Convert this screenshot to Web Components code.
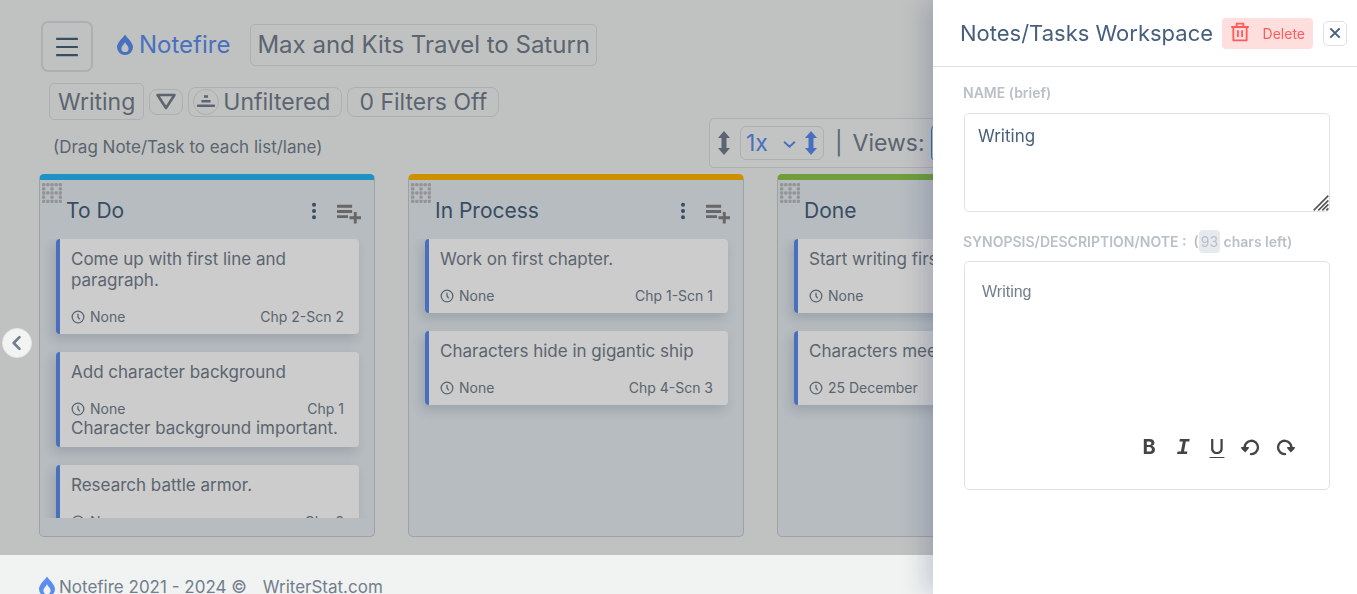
<!DOCTYPE html>
<html lang="en">
<head>
<meta charset="utf-8">
<title>Notefire</title>
<style>
    html {
        --primary: #5a8dee;
        --heading: #475f7b;
        --text: #727e8c;
        --border: #d9dbdc;
        --danger: #ff5b5c;
    }

    body {
        margin: 0;
        overflow: hidden;
        background: #f1f3f2;
        color: var(--text);
        font: 17px/21px Inter, "Liberation Sans", sans-serif;
    }
</style>
</head>
<body>

<nf-workspace>
    <nf-header project="Max and Kits Travel to Saturn"></nf-header>
    <nf-toolbar></nf-toolbar>
    <nf-board>
        <nf-lane name="To Do" style="--lane: #27b7f5">
            <nf-card due="None" place="Chp 2-Scn 2">Come up with first line and paragraph.</nf-card>
            <nf-card due="None" place="Chp 1">Add character background<span slot="note">Character background important.</span></nf-card>
            <nf-card due="None" place="Chp 2">Research battle armor.</nf-card>
        </nf-lane>
        <nf-lane name="In Process" style="--lane: #ffb400">
            <nf-card due="None" place="Chp 1-Scn 1">Work on first chapter.</nf-card>
            <nf-card due="None" place="Chp 4-Scn 3">Characters hide in gigantic ship</nf-card>
        </nf-lane>
        <nf-lane name="Done" style="--lane: #8bc649">
            <nf-card due="None" place="">Start writing first</nf-card>
            <nf-card due="25 December" place="">Characters meet</nf-card>
        </nf-lane>
    </nf-board>
</nf-workspace>
<nf-footer></nf-footer>
<nf-drawer></nf-drawer>

<template id="nf-workspace">
    <style>
        :host {
            display: block;
            position: relative;
            padding: 21px 39px 18px;
        }

        /* dims the board while the drawer is open */
        .backdrop {
            position: absolute;
            inset: 0;
            background: rgba(0, 0, 0, .2);
            pointer-events: none;
        }

        .back {
            position: fixed;
            left: 2px;
            top: 328px;
            width: 30px;
            height: 30px;
            padding: 0;
            display: grid;
            place-items: center;
            border: 1px solid #e4e6e7;
            border-radius: 50%;
            background: #f2f4f4;
            color: var(--text);
        }
    </style>
    <slot></slot>
    <div class="backdrop"></div>
    <button class="back" aria-label="Back"><nf-icon name="left" size="20"></nf-icon></button>
</template>

<template id="nf-header">
    <style>
        :host {
            display: flex;
            align-items: center;
            padding-left: 2px;
            font-size: 24px;
            line-height: 30px;
        }

        button {
            font: inherit;
            color: inherit;
            background: transparent;
            border: 1px solid var(--border);
            border-radius: 5px;
        }

        .menu {
            width: 52px;
            height: 51px;
            padding: 0;
            display: grid;
            place-items: center;
            border-width: 2px;
            border-radius: 7px;
            color: var(--heading);
        }

        a {
            display: flex;
            align-items: center;
            gap: 2px;
            margin: 0 20px 3px 20px;
            color: var(--primary);
            text-decoration: none;
        }

        .project {
            padding: 5px 6px;
            margin-bottom: 3px;
        }
    </style>
    <button class="menu" aria-label="Menu"><nf-icon name="menu" size="26"></nf-icon></button>
    <a href="#"><nf-icon name="fire" size="24"></nf-icon>Notefire</a>
    <button class="project"></button>
</template>

<template id="nf-toolbar">
    <style>
        :host {
            display: grid;
            grid-template-columns: 11fr 10fr;
            align-items: end;
            margin: 11px 0 6px;
            font-size: 23px;
            line-height: 28px;
        }

        button {
            font: inherit;
            color: inherit;
            background: transparent;
            border: 1px solid var(--border);
            border-radius: 8px;
        }

        .filters {
            display: flex;
            align-items: center;
            gap: 5px;
            padding-left: 10px;
        }

        .list {
            padding: 4px 8px 3px;
            border-radius: 5px;
        }

        .sort {
            width: 34px;
            height: 26px;
            padding: 0;
            display: grid;
            place-items: center;
        }

        .filter {
            display: flex;
            align-items: center;
            gap: 4px;
            height: 30px;
            padding: 0 11px 0 4px;
        }

        .filter .ring {
            display: grid;
            place-items: center;
            width: 24px;
            height: 24px;
            border: 1px solid var(--border);
            border-radius: 50%;
        }

        .filter.plain {
            padding: 0 11px;
        }

        p {
            margin: 15px 0 9px 14px;
            font-size: 17px;
            line-height: 24px;
        }

        .views {
            display: flex;
            align-items: center;
            box-sizing: border-box;
            height: 50px;
            padding: 0 2px;
            border: 1px solid var(--border);
            border-radius: 5px;
            background: rgba(255, 255, 255, .15);
        }

        .zoom {
            display: flex;
            align-items: center;
            box-sizing: border-box;
            height: 34px;
            margin: 0 11px 0 4px;
            border: 1px solid var(--border);
            border-radius: 6px;
            color: var(--primary);
        }

        select {
            grid-area: 1 / 1;
            width: 58px;
            padding: 0 0 0 5px;
            font: inherit;
            color: inherit;
            appearance: none;
            border: 0;
            background: transparent;
        }

        .pick {
            display: grid;
            align-items: center;
        }

        .pick nf-icon {
            grid-area: 1 / 1;
            justify-self: end;
            margin: 3px 3px 0 0;
            pointer-events: none;
        }

        .bar {
            margin-right: 10px;
        }

        .view {
            width: 46px;
            height: 38px;
            margin-left: 6px;
            padding: 0;
            border-radius: 6px;
        }

        .view.on {
            border-color: #2a94dd;
        }
    </style>
    <div>
        <div class="filters">
            <button class="list">Writing</button>
            <button class="sort" aria-label="Sort"><nf-icon name="triangle" size="24"></nf-icon></button>
            <button class="filter"><span class="ring"><nf-icon name="stack" size="20"></nf-icon></span>Unfiltered</button>
            <button class="filter plain">0 Filters Off</button>
        </div>
        <p>(Drag Note/Task to each list/lane)</p>
    </div>
    <div class="views">
        <nf-icon name="updown" size="24"></nf-icon>
        <div class="zoom">
            <span class="pick">
                <select aria-label="Height"><option>1x</option></select>
                <nf-icon name="down" size="13"></nf-icon>
            </span>
            <nf-icon name="updown" size="24"></nf-icon>
        </div>
        <span class="bar">|</span>Views:
        <button class="view on" aria-label="Board view"></button>
        <button class="view" aria-label="List view"></button>
    </div>
</template>

<template id="nf-board">
    <style>
        :host {
            display: grid;
            grid-auto-flow: column;
            grid-auto-columns: 336px;
            gap: 33px;
        }
    </style>
    <slot></slot>
</template>

<template id="nf-lane">
    <style>
        :host {
            display: flex;
            flex-direction: column;
            box-sizing: border-box;
            padding-bottom: 18px;
            border: 1px solid #c9cacc;
            border-top: 6px solid var(--lane);
            border-radius: 5px;
            background: #e4ebf0;
        }

        header {
            display: flex;
            align-items: center;
            height: 59px;
            box-sizing: border-box;
            padding: 3px 13px 0 2px;
            color: var(--heading);
        }

        .grip {
            align-self: flex-start;
            color: #b9babb;
        }

        h2 {
            flex: 1;
            margin: 0 0 0 4px;
            font-size: 21px;
            line-height: 26px;
            font-weight: 400;
        }

        button {
            display: grid;
            padding: 0;
            border: 0;
            background: transparent;
            color: inherit;
        }

        .add {
            margin: 5px 0 0 12px;
            color: #828080;
        }

        .cards {
            display: flex;
            flex-direction: column;
            gap: 18px;
            height: 279px;
            padding: 0 15px 0 16px;
            overflow: hidden;
        }
    </style>
    <header>
        <nf-icon class="grip" name="grip" size="20"></nf-icon>
        <h2></h2>
        <button aria-label="Lane menu"><nf-icon name="dots" size="20"></nf-icon></button>
        <button class="add" aria-label="Add note"><nf-icon name="add" size="25"></nf-icon></button>
    </header>
    <div class="cards"><slot></slot></div>
</template>

<template id="nf-card">
    <style>
        :host {
            display: block;
            flex: none;
            padding: 10px 15px 8px 11px;
            border-left: 4px solid var(--primary);
            border-radius: 4px;
            background: #fff;
            box-shadow: -3px 5px 12px rgba(25, 42, 70, .16);
        }

        .meta {
            display: flex;
            align-items: center;
            margin-top: 17px;
            font-size: 14px;
            line-height: 18px;
        }

        .due {
            flex: 1;
            margin-left: 5px;
        }
    </style>
    <div><slot></slot></div>
    <div class="meta">
        <nf-icon name="clock" size="14"></nf-icon>
        <span class="due"></span>
        <span class="place"></span>
    </div>
    <slot name="note"></slot>
</template>

<template id="nf-footer">
    <style>
        :host {
            display: flex;
            align-items: center;
            padding: 20px 35px;
            line-height: 24px;
        }

        nf-icon {
            color: var(--primary);
        }

        a {
            margin-left: 16px;
            color: inherit;
            text-decoration: none;
        }
    </style>
    <nf-icon name="fire" size="24"></nf-icon>
    <span>Notefire 2021 - 2024 ©</span>
    <a href="#">WriterStat.com</a>
</template>

<template id="nf-drawer">
    <style>
        :host {
            position: fixed;
            top: 0;
            right: 0;
            bottom: 0;
            width: 424px;
            background: #fff;
            box-shadow: -8px 0 24px rgba(25, 42, 90, .2);
        }

        header {
            display: flex;
            align-items: center;
            box-sizing: border-box;
            height: 67px;
            padding: 0 10px 0 27px;
            border-bottom: 1px solid #dfe3ea;
            color: var(--heading);
        }

        h1 {
            flex: 1;
            margin: 0;
            font-size: 22px;
            line-height: 28px;
            font-weight: 400;
            white-space: nowrap;
        }

        button {
            padding: 0;
            border: 0;
            background: transparent;
            color: inherit;
        }

        .delete {
            display: flex;
            align-items: center;
            gap: 13px;
            height: 31px;
            padding: 2px 8px 0;
            border-radius: 4px;
            background: #ffdede;
            color: var(--danger);
            font: 14px/18px Inter, sans-serif;
        }

        .delete nf-icon {
            margin-bottom: 4px;
        }

        .close {
            display: grid;
            place-items: center;
            width: 24px;
            height: 25px;
            margin-left: 10px;
            border: 1px solid #dfe3e7;
            border-radius: 5px;
        }

        form {
            display: flex;
            flex-direction: column;
            padding: 17px 27px 0 31px;
        }

        label {
            margin-left: -1px;
            color: #bac0c7;
            font-size: 14px;
            font-weight: 600;
            line-height: 18px;
            white-space: nowrap;
        }

        label span {
            padding: 3px 2px;
            border-radius: 4px;
            background: #e6eaee;
            font-weight: 400;
        }

        textarea {
            display: block;
            box-sizing: border-box;
            width: 100%;
            resize: none;
            border: 0;
            outline: 0;
            background: transparent;
        }

        .name,
        .editor {
            position: relative;
            border: 1px solid #dfe3e7;
            border-radius: 5px;
        }

        .name {
            margin: 11px 0 21px;
        }

        .name textarea {
            height: 97px;
            padding: 11px 13px;
            color: var(--heading);
            font: 17px/22px Inter, sans-serif;
        }

        .name nf-icon {
            position: absolute;
            right: 0;
            bottom: 0;
            color: #555;
            pointer-events: none;
        }

        .editor {
            margin-top: 10px;
        }

        .editor textarea {
            height: 169px;
            padding: 19px 17px;
            color: var(--text);
            font: 16px/22px "Liberation Sans", sans-serif;
        }

        .tools {
            display: flex;
            justify-content: flex-end;
            gap: 10px;
            padding: 4px 32px 30px;
            color: #444;
        }

        .tools button {
            display: grid;
            place-items: center;
            width: 24px;
            height: 24px;
            font: 700 20px/24px Inter, sans-serif;
        }

        .tools .italic {
            padding-top: 2px;
            font: italic 700 22px/24px "Liberation Mono", monospace;
        }

        .tools .underline {
            font-weight: 500;
            text-decoration: underline 1px;
            text-underline-offset: 3px;
        }
    </style>
    <header>
        <h1>Notes/Tasks Workspace</h1>
        <button class="delete"><nf-icon name="trash" size="20"></nf-icon>Delete</button>
        <button class="close" aria-label="Close"><nf-icon name="close" size="14"></nf-icon></button>
    </header>
    <form>
        <label for="name">NAME (brief)</label>
        <div class="name">
            <textarea id="name">Writing</textarea>
            <nf-icon name="resize" size="16"></nf-icon>
        </div>
        <label for="synopsis">SYNOPSIS/DESCRIPTION/NOTE : &nbsp;(<span>93</span> chars left)</label>
        <div class="editor">
            <textarea id="synopsis">Writing</textarea>
            <div class="tools">
                <button type="button" aria-label="Bold">B</button>
                <button type="button" class="italic" aria-label="Italic">I</button>
                <button type="button" class="underline" aria-label="Underline">U</button>
                <button type="button" aria-label="Undo"><nf-icon name="undo" size="20"></nf-icon></button>
                <button type="button" aria-label="Redo"><nf-icon name="redo" size="20"></nf-icon></button>
            </div>
        </div>
    </form>
</template>

<script>
    // 24x24 icon shapes, drawn in the current colour
    const line = (d, width = 2, more = "") =>
        `<path d="${d}" fill="none" stroke="currentColor" stroke-width="${width}" ${more}/>`;
    const solid = d => `<path d="${d}" fill="currentColor" fill-rule="evenodd"/>`;
    const round = 'stroke-linecap="round" stroke-linejoin="round"';

    // 5x5 dots with four of them left out
    let grip = "";
    for (let y = 0; y < 5; y++) {
        for (let x = 0; x < 5; x++) {
            if ((y === 1 || y === 3) && (x === 1 || x === 3)) continue;
            grip += `<rect x="${x * 5}" y="${y * 5}" width="4" height="4" rx="1.4" fill="currentColor"/>`;
        }
    }

    const ICONS = {
        menu: line("M2 4.5h20M2 12h20M2 19.5h20"),
        fire: solid("M12 1.5C11 3.5 4 9.5 4 14a8 8 0 0 0 16 0C20 9.5 13 3.5 12 1.5zM12 19a3.6 3.6 0 0 1-3.6-3.6C8.400 13 11.200 11 12 9.200c.8 1.800 3.600 3.800 3.600 6.200A3.600 3.600 0 0 1 12 19z"),
        left: line("M15 5l-7 7 7 7", 3.2, round),
        down: line("M3 8l9 8 9-8", 3.6, round),
        triangle: line("M3.500 5h17L12 18z", 2.6, 'stroke-linejoin="round"'),
        stack: line("M9.500 5.500h5M6.500 11h11", 3) + line("M2.500 16.500h19", 3, 'stroke-linecap="round"'),
        updown: solid("M12 0l6 7h-3.500v10H18l-6 7-6-7h3.500V7H6z"),
        dots: solid("M12 2.2a2.400 2.400 0 1 1 0 4.800a2.400 2.400 0 1 1 0-4.800zM12 9.600a2.400 2.400 0 1 1 0 4.800a2.400 2.400 0 1 1 0-4.800zM12 17a2.400 2.400 0 1 1 0 4.800a2.400 2.400 0 1 1 0-4.800z"),
        add: line("M1 5h14.500M1 10h14.500M1 15h10.500M18.500 10.500v11M13 16h11", 2.8),
        clock: line("M12 2a10 10 0 1 1 0 20a10 10 0 1 1 0-20zM12 6.500V12l3 4", 2.2),
        trash: line("M1.500 6h21M8 5.500V2h8v3.500M4 6v16h16V6M9.500 10v8M14.500 10v8", 2.2, 'stroke-linejoin="round"'),
        close: line("M4 4l16 16M20 4L4 20", 3.4),
        undo: line("M4.500 14A8 8 0 1 1 12 20.500", 2.8, 'stroke-linecap="round"') + solid("M0 12h9.500l-.5 2-4 4.500-4.500-4.500z"),
        redo: line("M19.500 14A8 8 0 1 0 12 20.500", 2.8, 'stroke-linecap="round"') + solid("M24 12h-9.500l.5 2 4 4.500 4.500-4.500z"),
        resize: line("M1 23L23 1M8 23L23 8M14 23l9-9M20 23l3-3", 2.4),
        grip
    };

    class NfElement extends HTMLElement {
        constructor() {
            super();
            const template = document.getElementById(this.localName);
            this.attachShadow({ mode: "open" }).appendChild(template.content.cloneNode(true));
        }

        setText(selector, attribute) {
            this.shadowRoot.querySelector(selector).textContent = this.getAttribute(attribute);
        }
    }

    customElements.define("nf-icon", class extends HTMLElement {
        constructor() {
            super();
            this.attachShadow({ mode: "open" });
        }

        connectedCallback() {
            const size = this.getAttribute("size") || 24;
            this.shadowRoot.innerHTML = `
                <style>
                    :host { display: inline-block; flex: none; line-height: 0; }
                    svg { display: block; }
                </style>
                <svg width="${size}" height="${size}" viewBox="0 0 24 24" aria-hidden="true">${ICONS[this.getAttribute("name")]}</svg>`;
        }
    });

    customElements.define("nf-card", class extends NfElement {
        connectedCallback() {
            this.setText(".due", "due");
            this.setText(".place", "place");
        }
    });

    customElements.define("nf-lane", class extends NfElement {
        connectedCallback() {
            this.setText("h2", "name");
        }
    });

    customElements.define("nf-header", class extends NfElement {
        connectedCallback() {
            this.setText(".project", "project");
        }
    });

    customElements.define("nf-toolbar", class extends NfElement {});
    customElements.define("nf-board", class extends NfElement {});
    customElements.define("nf-workspace", class extends NfElement {});
    customElements.define("nf-footer", class extends NfElement {});
    customElements.define("nf-drawer", class extends NfElement {});
</script>
</body>
</html>
